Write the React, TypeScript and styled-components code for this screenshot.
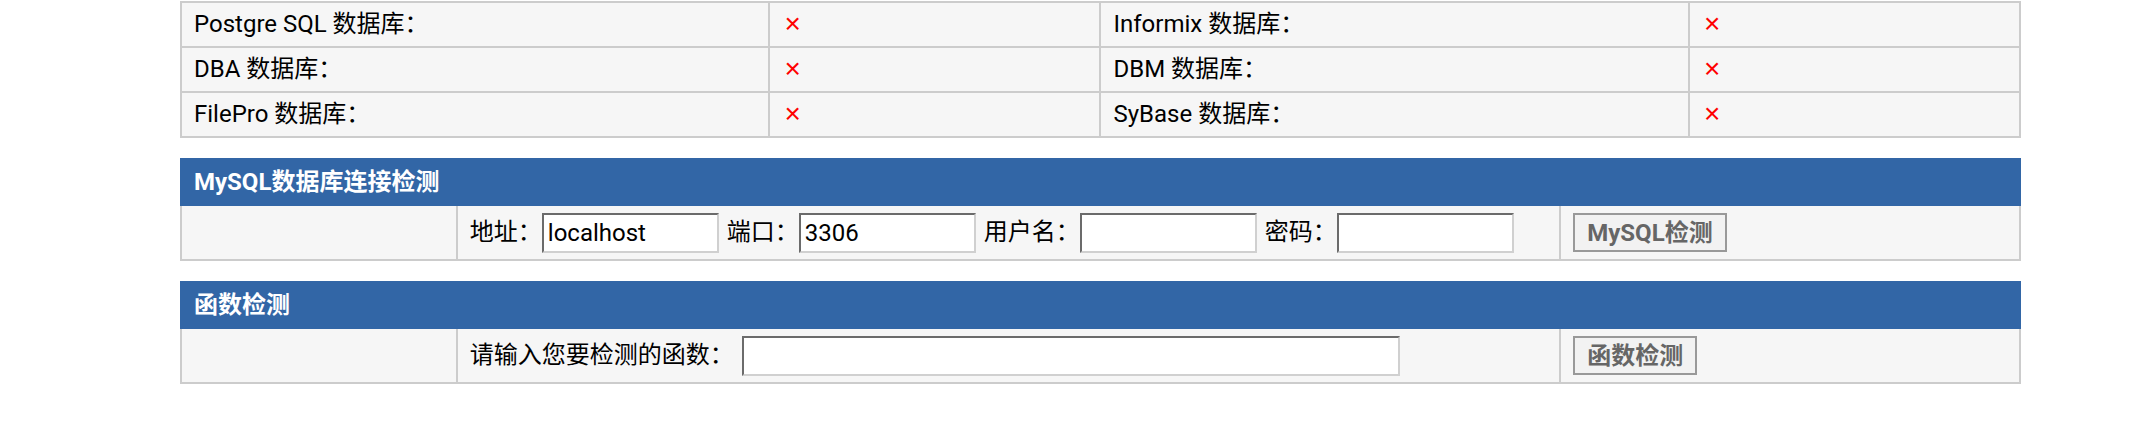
import React from "react";
import styled, { createGlobalStyle } from "styled-components";

const GlobalStyle = createGlobalStyle`
  html, body { margin: 0; padding: 0; background: #fff; }
  body {
    font-family: Roboto, "Noto Sans CJK SC", sans-serif;
    font-size: 24px;
    color: #000;
  }
`;

const Page = styled.div`
  width: 1841px;
  margin-left: 180px;
  padding-top: 1px;
  display: flex;
  flex-direction: column;
  gap: 20px;
`;

const Table = styled.table`
  width: 100%;
  table-layout: fixed;
  border-collapse: collapse;
  background: #f6f6f6;
`;

const Col = styled.col<{ $w: string }>`
  width: ${(p) => p.$w};
`;

const Row = styled.tr<{ $h: number }>`
  height: ${(p) => p.$h}px;
`;

const Cell = styled.td`
  padding: 0 12px;
  border: 2px solid #ccc;
  vertical-align: middle;
  white-space: nowrap;
  line-height: 1.2;
`;

const Head = styled.th`
  padding: 0 12px;
  background: #3266a6;
  border: 2px solid #3266a6;
  color: #fff;
  font-weight: bold;
  text-align: left;
  vertical-align: middle;
  line-height: 1.2;
`;

const Cross = styled.span`
  display: inline-block;
  padding-left: 2px;
  font-family: "Liberation Sans", Arial, sans-serif;
  font-size: 28px;
  line-height: 1;
  color: #ff0000;
`;

const Fields = styled.div`
  display: flex;
  align-items: center;
  gap: 8px;
`;

const Field = styled.label<{ $gap?: number }>`
  display: flex;
  align-items: center;
  gap: ${(p) => p.$gap ?? 0}px;
`;

const TextInput = styled.input<{ $w: number }>`
  box-sizing: border-box;
  width: ${(p) => p.$w}px;
  height: 40px;
  padding: 0 4px;
  border-width: 2px;
  border-style: solid;
  border-color: #6b6b6b #d0d0d0 #d0d0d0 #6b6b6b;
  background: #fff;
  font: inherit;
  color: #000;
  outline: none;
`;

const Button = styled.button`
  box-sizing: border-box;
  height: 39px;
  padding: 0 12px;
  border: 2px solid #999;
  background: #f2f2f2;
  color: #666;
  font: inherit;
  font-weight: bold;
  line-height: 1;
  cursor: pointer;
`;

const dbRows: [string, string][] = [
  ["Postgre SQL 数据库：", "Informix 数据库："],
  ["DBA 数据库：", "DBM 数据库："],
  ["FilePro 数据库：", "SyBase 数据库："],
];

function CheckCols() {
  return (
    <colgroup>
      <Col $w="15%" />
      <Col $w="60%" />
      <Col $w="25%" />
    </colgroup>
  );
}

export default function App() {
  return (
    <>
      <GlobalStyle />
      <Page>
        <Table>
          <colgroup>
            <Col $w="32%" />
            <Col $w="18%" />
            <Col $w="32%" />
            <Col $w="18%" />
          </colgroup>
          <tbody>
            {dbRows.map(([a, b]) => (
              <Row $h={45} key={a}>
                <Cell>{a}</Cell>
                <Cell>
                  <Cross>×</Cross>
                </Cell>
                <Cell>{b}</Cell>
                <Cell>
                  <Cross>×</Cross>
                </Cell>
              </Row>
            ))}
          </tbody>
        </Table>

        <Table>
          <CheckCols />
          <thead>
            <Row $h={46}>
              <Head colSpan={3}>MySQL数据库连接检测</Head>
            </Row>
          </thead>
          <tbody>
            <Row $h={55}>
              <Cell></Cell>
              <Cell>
                <Fields>
                  <Field>
                    地址：
                    <TextInput $w={177} defaultValue="localhost" />
                  </Field>
                  <Field>
                    端口：
                    <TextInput $w={177} defaultValue="3306" />
                  </Field>
                  <Field>
                    用户名：
                    <TextInput $w={177} />
                  </Field>
                  <Field>
                    密码：
                    <TextInput $w={177} type="password" />
                  </Field>
                </Fields>
              </Cell>
              <Cell>
                <Button type="button">MySQL检测</Button>
              </Cell>
            </Row>
          </tbody>
        </Table>

        <Table>
          <CheckCols />
          <thead>
            <Row $h={46}>
              <Head colSpan={3}>函数检测</Head>
            </Row>
          </thead>
          <tbody>
            <Row $h={55}>
              <Cell></Cell>
              <Cell>
                <Fields>
                  <Field $gap={8}>
                    请输入您要检测的函数：
                    <TextInput $w={658} />
                  </Field>
                </Fields>
              </Cell>
              <Cell>
                <Button type="button">函数检测</Button>
              </Cell>
            </Row>
          </tbody>
        </Table>
      </Page>
    </>
  );
}
